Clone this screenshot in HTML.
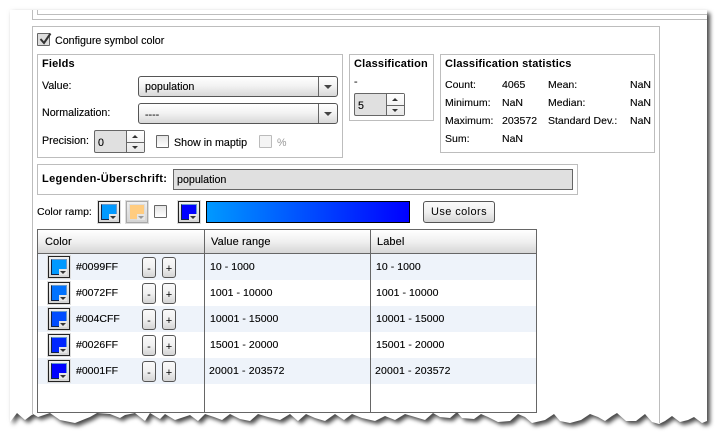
<!DOCTYPE html>
<html><head><meta charset="utf-8">
<style>
html,body{margin:0;padding:0;background:#fff}
#p{position:relative;width:718px;height:441px;overflow:hidden;background:#fff;font:10.7px "Liberation Sans",sans-serif;color:#000}
#p div,#p span.t{position:absolute;box-sizing:border-box}
.t{white-space:nowrap;line-height:14px;height:14px;margin-top:1px;-webkit-text-stroke:.12px #000}
.b{font-weight:bold;font-size:11px;letter-spacing:.17px;color:#000;-webkit-text-stroke:0}
.s{font-size:10.5px}
.r{letter-spacing:.05px}
.h{font-size:11px;letter-spacing:.1px}
.box{border:1px solid #bdbdbd}
.sel{border:1px solid #555;border-radius:3px;background:linear-gradient(#fff,#f3f3f3 45%,#d8d8d8)}
.sel i{position:absolute;right:0;top:0;bottom:0;width:18px;border-left:1px solid #666}
.sel i:after{content:"";position:absolute;left:5px;top:8px;border:4px solid transparent;border-top:4px solid #444;border-bottom:0}
.sp{border:1px solid #666;border-radius:2px;background:#e0e0e0}
.sp .q{right:0;top:0;bottom:0;width:18px;border-left:1px solid #666;background:linear-gradient(#fff,#e8e8e8)}
.sp .m{left:0;right:0;top:50%;height:1px;background:#666}
.up{width:0;height:0;left:5px;top:4px;border:3px solid transparent;border-bottom:3px solid #333;border-top:0}
.dn{width:0;height:0;left:5px;bottom:3px;border:3px solid transparent;border-top:3px solid #333;border-bottom:0}
.cb{width:13px;height:13px;border:1px solid #666;border-radius:1px;background:linear-gradient(#e4e4e4,#fff)}
.sw{width:22px;height:22px;border:1px solid #222;background:linear-gradient(#f0f0f0,#d4d4d4);box-shadow:0 0 0 1px #ddd}
.sw .c{left:2px;top:2px;width:16px;height:16px;border:1px solid #124;border-top-color:#69c;border-right-color:#69c}
.sw .n{right:2px;bottom:2px;width:8px;height:6px;background:#e6e6e6}
.sw .a{right:3px;bottom:3px;width:0;height:0;border:3px solid transparent;border-top:3px solid #333;border-bottom:0}
.btn{border:1px solid #555;border-radius:3px;background:linear-gradient(#fafafa,#f0f0f0 50%,#d4d4d4);text-align:center;color:#000}
.pm{width:14px;height:21px;line-height:22px;font-size:11px;letter-spacing:0}
</style></head><body>
<div id="p">
<svg width="718" height="441" style="position:absolute;left:0;top:0">
<polygon style="filter:drop-shadow(3px 3px 2px rgba(0,0,0,.7)) drop-shadow(0 0 2px rgba(0,0,0,.06))" fill="#fff" points="10,10 707,10 707,421 702,423 694,417 688,420 680,422 672,416 665,421 659,424 652,422 645,414 636,421 626,421 617,413 612,416 605,421 598,417 590,414 581,420 570,423 560,421 554,414 545,420 532,423 525,417 518,414 510,421 498,422 488,417 481,414 474,419 462,418 457,412 450,418 440,417 433,413 425,420 415,417 405,414 395,420 385,416 375,421 362,418 352,414 344,420 335,414 325,421 315,418 306,414 298,421 290,414 280,420 268,417 258,414 250,421 240,419 230,414 222,420 214,417 205,414 198,421 190,415 175,420 165,414 160,419 150,413 145,421 135,413 125,415 120,418 110,414 97,413 90,417 75,423 60,420 50,413 38,417 33,414 25,420 17,413 10,422"/>
<line x1="37.5" y1="10" x2="37.5" y2="14" stroke="#bdbdbd"/>
<line x1="32.5" y1="10" x2="32.5" y2="19" stroke="#bdbdbd"/>
<line x1="37" y1="14.5" x2="707" y2="14.5" stroke="#bdbdbd"/>
<line x1="32" y1="19.5" x2="707" y2="19.5" stroke="#bdbdbd"/>
<line x1="32.5" y1="26" x2="32.5" y2="415" stroke="#bdbdbd"/>
<line x1="32" y1="26.5" x2="660" y2="26.5" stroke="#bdbdbd"/>
<line x1="659.5" y1="26" x2="659.5" y2="423" stroke="#bdbdbd"/>
</svg>

<div class="cb" style="left:37px;top:33px;background:#ddd"></div>
<svg width="16" height="16" style="position:absolute;left:38px;top:31px"><path d="M2.5 8 L6 12 L12.5 2.5" fill="none" stroke="#333" stroke-width="2"/></svg>
<span class="t" style="left:55px;top:33px">Configure symbol color</span>

<div class="box" style="left:37px;top:54px;width:306px;height:104px"></div>
<span class="t b" style="left:42px;top:56px">Fields</span>
<span class="t" style="left:42px;top:78px">Value:</span>
<div class="sel" style="left:138px;top:76px;width:200px;height:21px"><i></i></div>
<span class="t" style="left:145px;top:79px">population</span>
<span class="t" style="left:42px;top:105px">Normalization:</span>
<div class="sel" style="left:138px;top:103px;width:200px;height:21px"><i></i></div>
<span class="t" style="left:145px;top:107px">----</span>
<span class="t" style="left:42px;top:133px">Precision:</span>
<div class="sp" style="left:94px;top:130px;width:51px;height:23px"><div class="q"><div class="m"></div><div class="up"></div><div class="dn"></div></div></div>
<span class="t" style="left:98px;top:135px">0</span>
<div class="cb" style="left:156px;top:135px"></div>
<span class="t" style="left:174px;top:135px">Show in maptip</span>
<div class="cb" style="left:259px;top:135px;border-color:#bbb;background:#f4f4f4"></div>
<span class="t" style="left:277px;top:135px;color:#999;-webkit-text-stroke:0">%</span>

<div class="box" style="left:349px;top:54px;width:85px;height:67px"></div>
<span class="t b" style="left:354px;top:56px">Classification</span>
<span class="t" style="left:354px;top:74px">-</span>
<div class="sp" style="left:354px;top:93px;width:51px;height:23px"><div class="q"><div class="m"></div><div class="up"></div><div class="dn"></div></div></div>
<span class="t" style="left:358px;top:98px">5</span>

<div class="box" style="left:440px;top:54px;width:215px;height:99px"></div>
<span class="t b" style="left:445px;top:56px">Classification statistics</span>
<span class="t s" style="left:445px;top:77px">Count:</span><span class="t s" style="left:502px;top:77px">4065</span><span class="t s" style="left:548px;top:77px">Mean:</span><span class="t s" style="left:630px;top:77px">NaN</span>
<span class="t s" style="left:445px;top:95px">Minimum:</span><span class="t s" style="left:502px;top:95px">NaN</span><span class="t s" style="left:548px;top:95px">Median:</span><span class="t s" style="left:630px;top:95px">NaN</span>
<span class="t s" style="left:445px;top:113px">Maximum:</span><span class="t s" style="left:502px;top:113px">203572</span><span class="t s" style="left:548px;top:113px">Standard Dev.:</span><span class="t s" style="left:630px;top:113px">NaN</span>
<span class="t s" style="left:445px;top:131px">Sum:</span><span class="t s" style="left:502px;top:131px">NaN</span>

<div class="box" style="left:37px;top:164px;width:541px;height:31px"></div>
<span class="t b" style="left:42px;top:171px;letter-spacing:.35px">Legenden-Überschrift:</span>
<div style="left:173px;top:169px;width:400px;height:21px;background:#e0e0e0;border:1px solid #666"></div>
<span class="t" style="left:177px;top:172px">population</span>

<span class="t s" style="left:37px;top:204px">Color ramp:</span>
<div class="sw" style="left:98px;top:201px"><div class="c" style="background:#0099ff"></div><div class="n"></div><div class="a"></div></div>
<div class="sw" style="left:126px;top:201px;border-color:#aaa"><div class="c" style="background:#ffcc80;border-color:#ddd"></div><div class="n"></div><div class="a" style="border-top-color:#999"></div></div>
<div class="cb" style="left:154px;top:205px"></div>
<div class="sw" style="left:178px;top:201px"><div class="c" style="background:#0000ff"></div><div class="n"></div><div class="a"></div></div>
<div style="left:206px;top:201px;width:204px;height:22px;border:1px solid #000;background:linear-gradient(90deg,#0099ff,#0000ff)"></div>
<div class="btn" style="left:423px;top:201px;width:72px;height:22px;line-height:20px;font-size:11px;letter-spacing:.4px">Use colors</div>

<div style="left:37px;top:229px;width:500px;height:184px;border:1px solid #666;background:#fff"></div>
<div style="left:38px;top:230px;width:498px;height:23px;background:linear-gradient(#fff,#f0f0f0 50%,#d6d6d6)"></div>
<div style="left:37px;top:253px;width:500px;height:1px;background:#666"></div>
<div style="left:38px;top:254px;width:498px;height:26px;background:#eef3fa"></div>
<div style="left:38px;top:306px;width:498px;height:26px;background:#eef3fa"></div>
<div style="left:38px;top:358px;width:498px;height:26px;background:#eef3fa"></div>
<div style="left:204px;top:229px;width:1px;height:184px;background:#666"></div>
<div style="left:370px;top:229px;width:1px;height:184px;background:#666"></div>
<span class="t h" style="left:45px;top:234px">Color</span>
<span class="t h" style="left:211px;top:234px">Value range</span>
<span class="t h" style="left:377px;top:234px">Label</span>

<div class="sw" style="left:48px;top:256px"><div class="c" style="background:#0099ff"></div><div class="n"></div><div class="a"></div></div>
<span class="t s" style="left:76px;top:259px">#0099FF</span>
<div class="btn pm" style="left:142px;top:257px">-</div><div class="btn pm" style="left:162px;top:257px">+</div>
<span class="t s r" style="left:210px;top:259px">10 - 1000</span><span class="t s r" style="left:376px;top:259px">10 - 1000</span>

<div class="sw" style="left:48px;top:282px"><div class="c" style="background:#0072ff"></div><div class="n"></div><div class="a"></div></div>
<span class="t s" style="left:76px;top:285px">#0072FF</span>
<div class="btn pm" style="left:142px;top:283px">-</div><div class="btn pm" style="left:162px;top:283px">+</div>
<span class="t s r" style="left:210px;top:285px">1001 - 10000</span><span class="t s r" style="left:376px;top:285px">1001 - 10000</span>

<div class="sw" style="left:48px;top:308px"><div class="c" style="background:#004cff"></div><div class="n"></div><div class="a"></div></div>
<span class="t s" style="left:76px;top:311px">#004CFF</span>
<div class="btn pm" style="left:142px;top:309px">-</div><div class="btn pm" style="left:162px;top:309px">+</div>
<span class="t s r" style="left:210px;top:311px">10001 - 15000</span><span class="t s r" style="left:376px;top:311px">10001 - 15000</span>

<div class="sw" style="left:48px;top:334px"><div class="c" style="background:#0026ff"></div><div class="n"></div><div class="a"></div></div>
<span class="t s" style="left:76px;top:337px">#0026FF</span>
<div class="btn pm" style="left:142px;top:335px">-</div><div class="btn pm" style="left:162px;top:335px">+</div>
<span class="t s r" style="left:210px;top:337px">15001 - 20000</span><span class="t s r" style="left:376px;top:337px">15001 - 20000</span>

<div class="sw" style="left:48px;top:360px"><div class="c" style="background:#0001ff"></div><div class="n"></div><div class="a"></div></div>
<span class="t s" style="left:76px;top:363px">#0001FF</span>
<div class="btn pm" style="left:142px;top:361px">-</div><div class="btn pm" style="left:162px;top:361px">+</div>
<span class="t s r" style="left:209px;top:363px;letter-spacing:.15px">20001 - 203572</span><span class="t s r" style="left:375px;top:363px;letter-spacing:.15px">20001 - 203572</span>
</div>
</body></html>
